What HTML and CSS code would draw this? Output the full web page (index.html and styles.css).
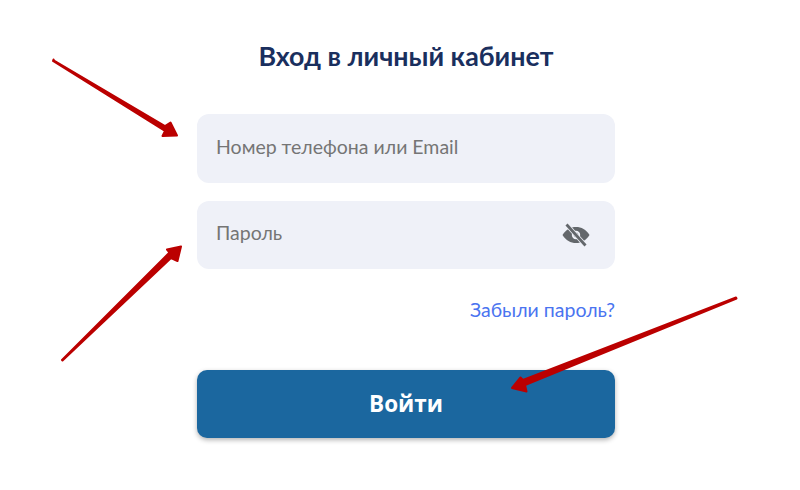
FILE: index.html
```html
<!DOCTYPE html>
<html lang="ru">
  <head>
    <meta charset="UTF-8" />
    <meta name="viewport" content="width=device-width, initial-scale=1.0" />
    <title>Вход в личный кабинет</title>
    <link rel="stylesheet" href="styles.css">
  </head>
  <body>
    <div class="page">
      <form class="login">
        <h1 class="title">Вход в личный кабинет</h1>

        <div class="field">
          <span class="placeholder">Номер телефона или Email</span>
        </div>

        <div class="field field-password">
          <span class="placeholder">Пароль</span>
          <svg class="eye" width="30" height="24" viewBox="0 0 30 24">
            <path d="M1.500 12C5 6.500 9.500 4 15 4S25 6.500 28.500 12C25 17.500 20.500 20 15 20S5 17.500 1.500 12z" fill="#63676b" />
            <circle cx="15" cy="12" r="4.200" fill="#eff1f8" />
            <circle cx="15" cy="12" r="2.400" fill="#63676b" />
            <path d="M5.500 1.500L24.500 22.500" stroke="#eff1f8" stroke-width="4.400" />
            <path d="M5.500 1.500L24.500 22.500" stroke="#63676b" stroke-width="2.800" />
          </svg>
        </div>

        <div class="forgot">
          <a href="javascript:;">Забыли пароль?</a>
        </div>

        <button type="button" class="submit">Войти</button>
      </form>

      <!-- красные стрелки поверх формы -->
      <svg class="arrows" width="800" height="490" viewBox="0 0 800 490">
        <path d="M53.500 59.500L54 60.500L165 126L170.500 122.500L177 135.500L162.500 136L165 131L53 61z" />
        <path d="M62 360L62.500 360.500L171 258L177.500 261L181 246.500L167 249.500L169.500 252.500z" />
        <path d="M736 297.500L736.500 298.500L525 385L526.500 391.500L512 388L520.500 377.500L523 380z" />
      </svg>
    </div>
  </body>
</html>
```

FILE: styles.css
```css
* {
  margin: 0;
  padding: 0;
  box-sizing: border-box;
}

body {
  background-color: #fff;
  font-family: "Lato", "Noto Sans", sans-serif;
}

.page {
  position: relative;
  width: 800px;
  height: 490px;
  overflow: hidden;
}

.login {
  display: flex;
  flex-direction: column;
  width: 418px;
  margin-left: 197px;
  padding-top: 39px;
}

.title {
  margin-bottom: 41px;
  font-size: 26.8px;
  line-height: 34px;
  font-weight: 700;
  color: #1a2f5e;
  text-align: center;
}

.field {
  display: flex;
  justify-content: space-between;
  align-items: center;
  height: 69px;
  padding: 0 24px 0 19px;
  margin-bottom: 18px;
  background-color: #eff1f8;
  border-radius: 12px;
}

.field-password {
  height: 68px;
}

.placeholder {
  margin-top: -5px;
  font-size: 19.5px;
  color: #757575;
}

.forgot {
  margin-top: 11px;
  text-align: right;
  font-size: 19.5px;
  line-height: 24px;
}

.forgot a {
  color: #4a74f0;
  text-decoration: none;
}

.submit {
  height: 68px;
  margin-top: 48px;
  padding-bottom: 1px;
  border: 0;
  border-radius: 10px;
  background-color: #1b679f;
  box-shadow: 0 2px 5px rgba(0, 0, 0, 0.3);
  font-family: "Open Sans", "Noto Sans", sans-serif;
  font-size: 22.5px;
  font-weight: 700;
  color: #fff;
}

.arrows {
  position: absolute;
  left: 0;
  top: 0;
}

.arrows path {
  fill: #bb0000;
  stroke: #bb0000;
  stroke-width: 2;
  stroke-linejoin: round;
}
```
